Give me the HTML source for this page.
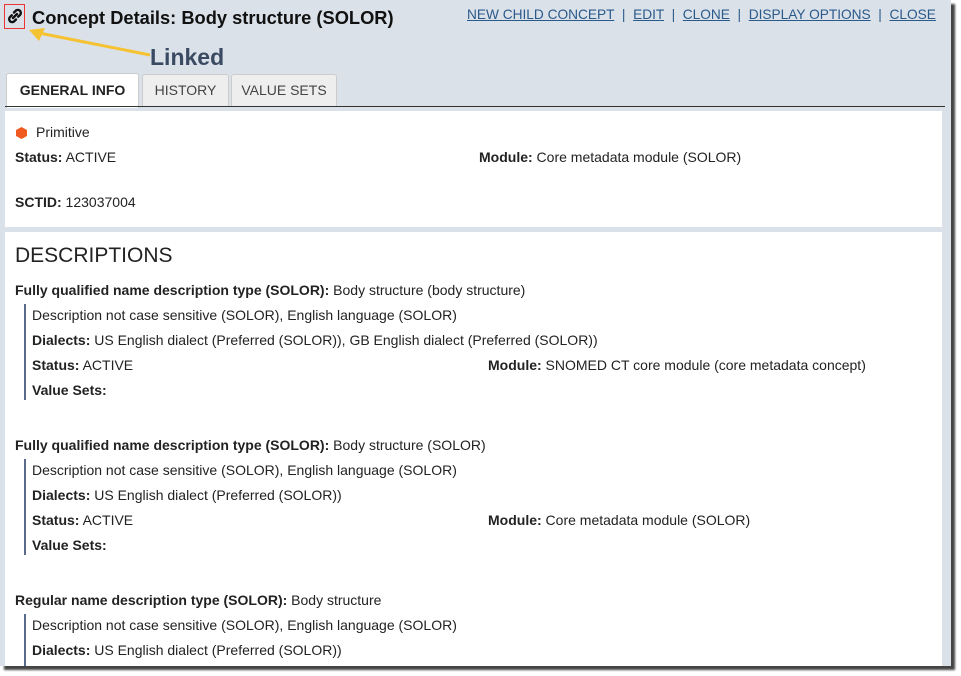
<!DOCTYPE html><html><head><style>
body{margin:0;width:961px;height:676px;background:#fff;position:relative;overflow:hidden;font-family:"Liberation Sans",sans-serif;font-size:14px;color:#222}
.frame{position:absolute;left:0;top:0;width:951px;height:666px;background:#dbe1e9;box-shadow:4px 4px 2px #444;overflow:hidden}
.a{position:absolute;white-space:nowrap}
b{font-weight:bold}
.lnk{color:#2a5a8a;text-decoration:underline}
.panel{position:absolute;left:5px;background:#fff;width:937px}
.bar{position:absolute;left:24px;width:2px;background:#5a6a8a}
</style></head><body><div class="frame">
<div class="a" style="left:4px;top:4px;width:21px;height:25px;border:1px solid #e33;box-sizing:border-box"></div>
<svg class="a" style="left:6px;top:7px" width="18" height="18" viewBox="0 0 18 18"><g fill="none" stroke="#111" stroke-width="2.4" stroke-linecap="round"><path d="M8 5.5l2-2a3 3 0 0 1 4.2 4.2l-2 2"/><path d="M10 12.5l-2 2a3 3 0 0 1-4.2-4.2l2-2"/><path d="M7 11l4-4"/></g></svg>
<div class="a" style="left:32px;top:7px;font-size:18.3px;font-weight:bold;color:#111">Concept Details: Body structure (SOLOR)</div>
<svg class="a" style="left:25px;top:25px" width="130" height="35"><path d="M125 30L14 8" stroke="#f5c232" stroke-width="3"/><path d="M4 5l16-2-6 13z" fill="#f5c232"/></svg>
<div class="a" style="left:150px;top:44px;font-size:23px;font-weight:bold;color:#3a4a62">Linked</div>
<div class="a" style="left:467px;top:7px;color:#2a5a8a;font-size:13.7px"><span class="lnk">NEW CHILD CONCEPT</span> &nbsp;| &nbsp;<span class="lnk">EDIT</span> &nbsp;| &nbsp;<span class="lnk">CLONE</span> &nbsp;| &nbsp;<span class="lnk">DISPLAY OPTIONS</span> &nbsp;| &nbsp;<span class="lnk">CLOSE</span></div>
<div class="a" style="left:6px;top:73px;width:131px;height:34px;background:#fff;border:1px solid #ccc;border-bottom:none;border-radius:3px 3px 0 0;text-align:center;line-height:33px;font-weight:bold;color:#222">GENERAL INFO</div>
<div class="a" style="left:142px;top:74px;width:85px;height:31px;background:#eee;border:1px solid #ccc;border-bottom:none;border-radius:3px 3px 0 0;text-align:center;line-height:31px;color:#444">HISTORY</div>
<div class="a" style="left:231px;top:74px;width:104px;height:31px;background:#eee;border:1px solid #ccc;border-bottom:none;border-radius:3px 3px 0 0;text-align:center;line-height:31px;color:#444">VALUE SETS</div>
<div class="a" style="left:5px;top:106px;width:940px;height:1px;background:#333"></div>
<div class="panel" style="top:111px;height:116px"></div>
<svg class="a" style="left:16px;top:127px" width="11" height="12"><path d="M5.5 0L11 3v6L5.5 12 0 9V3z" fill="#f05a20"/></svg>
<div class="a" style="left:36px;top:124px">Primitive</div>
<div class="a" style="left:15px;top:149px"><b>Status:</b> ACTIVE</div>
<div class="a" style="left:479px;top:149px"><b>Module:</b> Core metadata module (SOLOR)</div>
<div class="a" style="left:15px;top:194px"><b>SCTID:</b> 123037004</div>
<div class="panel" style="top:232px;height:440px"></div>
<div class="a" style="left:15px;top:244px;font-size:21px;color:#222">DESCRIPTIONS</div>
<div class="a" style="left:15px;top:282px"><b>Fully qualified name description type (SOLOR):</b> Body structure (body structure)</div>
<div class="bar" style="top:304px;height:96px"></div>
<div class="a" style="left:32px;top:307px">Description not case sensitive (SOLOR), English language (SOLOR)</div>
<div class="a" style="left:32px;top:332px"><b>Dialects:</b> US English dialect (Preferred (SOLOR)), GB English dialect (Preferred (SOLOR))</div>
<div class="a" style="left:32px;top:357px"><b>Status:</b> ACTIVE</div>
<div class="a" style="left:488px;top:357px"><b>Module:</b> SNOMED CT core module (core metadata concept)</div>
<div class="a" style="left:32px;top:382px"><b>Value Sets:</b></div>
<div class="a" style="left:15px;top:437px"><b>Fully qualified name description type (SOLOR):</b> Body structure (SOLOR)</div>
<div class="bar" style="top:459px;height:96px"></div>
<div class="a" style="left:32px;top:462px">Description not case sensitive (SOLOR), English language (SOLOR)</div>
<div class="a" style="left:32px;top:487px"><b>Dialects:</b> US English dialect (Preferred (SOLOR))</div>
<div class="a" style="left:32px;top:512px"><b>Status:</b> ACTIVE</div>
<div class="a" style="left:488px;top:512px"><b>Module:</b> Core metadata module (SOLOR)</div>
<div class="a" style="left:32px;top:537px"><b>Value Sets:</b></div>
<div class="a" style="left:15px;top:592px"><b>Regular name description type (SOLOR):</b> Body structure</div>
<div class="bar" style="top:614px;height:60px"></div>
<div class="a" style="left:32px;top:617px">Description not case sensitive (SOLOR), English language (SOLOR)</div>
<div class="a" style="left:32px;top:642px"><b>Dialects:</b> US English dialect (Preferred (SOLOR))</div>
</div></body></html>
